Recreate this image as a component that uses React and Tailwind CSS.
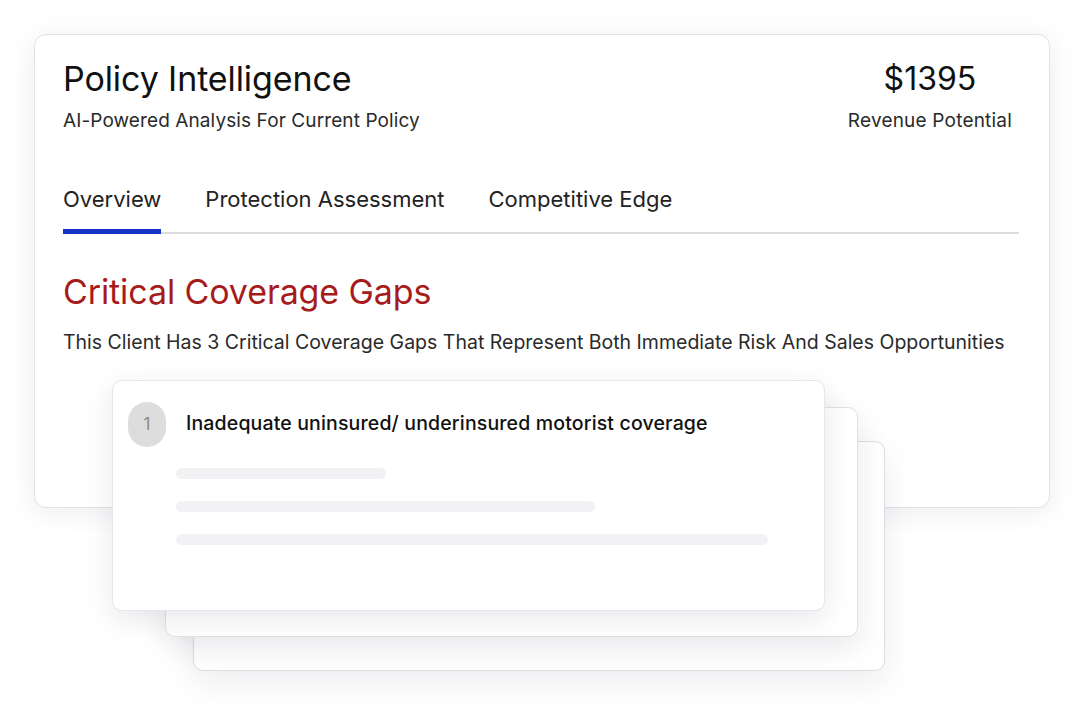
export default function App() {
  return (
    <div
      className="relative w-[1084px] h-[706px] bg-white overflow-hidden"
      style={{ fontFamily: "Inter, 'Liberation Sans', sans-serif" }}
    >
      <div className="ml-[34px] pt-[34px]">
        <div className="w-[1016px] h-[474px] bg-white rounded-[12px] border border-[#e2e2e8] shadow-[0_4px_28px_rgba(30,30,60,0.08)] pl-[28px] pr-[30px] pt-[24px]">
          <div className="flex justify-between">
            <div>
              <h1 className="text-[34px] leading-[40px] text-[#111] font-normal tracking-[-0.1px]">
                Policy Intelligence
              </h1>
              <p className="mt-[10px] text-[19px] leading-[24px] text-[#2a2a2a] tracking-[0.1px]">
                AI-Powered Analysis For Current Policy
              </p>
            </div>
            <div className="flex flex-col items-center pr-[7px]">
              <div className="text-[32px] leading-[40px] text-[#111]">$1395</div>
              <div className="mt-[10px] text-[19px] leading-[24px] text-[#2a2a2a] tracking-[0.2px]">Revenue Potential</div>
            </div>
          </div>
          <div className="mt-[52px] flex border-b-2 border-[#dcdce0] gap-[44px]">
            <div className="relative pb-[19px] text-[22px] leading-[28px] text-[#222]">
              Overview
              <div className="absolute left-0 right-0 -bottom-[2px] h-[5px] bg-[#1533c4]" />
            </div>
            <div className="pb-[19px] text-[22px] leading-[28px] text-[#222]">Protection Assessment</div>
            <div className="pb-[19px] text-[22px] leading-[28px] text-[#222]">Competitive Edge</div>
          </div>
          <h2 className="mt-[38px] text-[34px] leading-[40px] text-[#a61c1c] tracking-[-0.1px]">
            Critical Coverage Gaps
          </h2>
          <p className="mt-[17px] text-[19.5px] leading-[26px] text-[#2a2a2a]">
            This Client Has 3 Critical Coverage Gaps That Represent Both Immediate Risk And Sales Opportunities
          </p>
        </div>
      </div>

      {/* stacked cards */}
      <div className="absolute left-[193px] top-[441px] w-[692px] h-[230px] rounded-[10px] bg-white border border-[#dcdce2] shadow-[0_12px_32px_rgba(30,30,60,0.08)]" />
      <div className="absolute left-[165px] top-[407px] w-[693px] h-[230px] rounded-[10px] bg-white border border-[#e0e0e6] shadow-[0_10px_30px_rgba(30,30,60,0.10)]" />
      <div className="absolute left-[112px] top-[380px] w-[713px] h-[231px] rounded-[10px] bg-white border border-[#e6e6ec] shadow-[0_8px_28px_rgba(30,30,60,0.10)] pl-[15px] pt-[21px]">
        <div className="flex items-center">
          <div className="w-[38px] h-[45px] rounded-full bg-[#dddddd] flex items-center justify-center text-[17px] text-[#8a8a8a]">
            1
          </div>
          <div className="ml-[20px] -mt-[4px] text-[19.5px] leading-[24px] text-[#111] font-medium tracking-[0.15px]">
            Inadequate uninsured/ underinsured motorist coverage
          </div>
        </div>
        <div className="ml-[48px] mt-[21px] flex flex-col gap-[22px]">
          <div className="w-[210px] h-[11px] rounded-full bg-[#f2f2f4]" />
          <div className="w-[419px] h-[11px] rounded-full bg-[#f2f2f4]" />
          <div className="w-[592px] h-[11px] rounded-full bg-[#f2f2f4]" />
        </div>
      </div>
    </div>
  );
}
